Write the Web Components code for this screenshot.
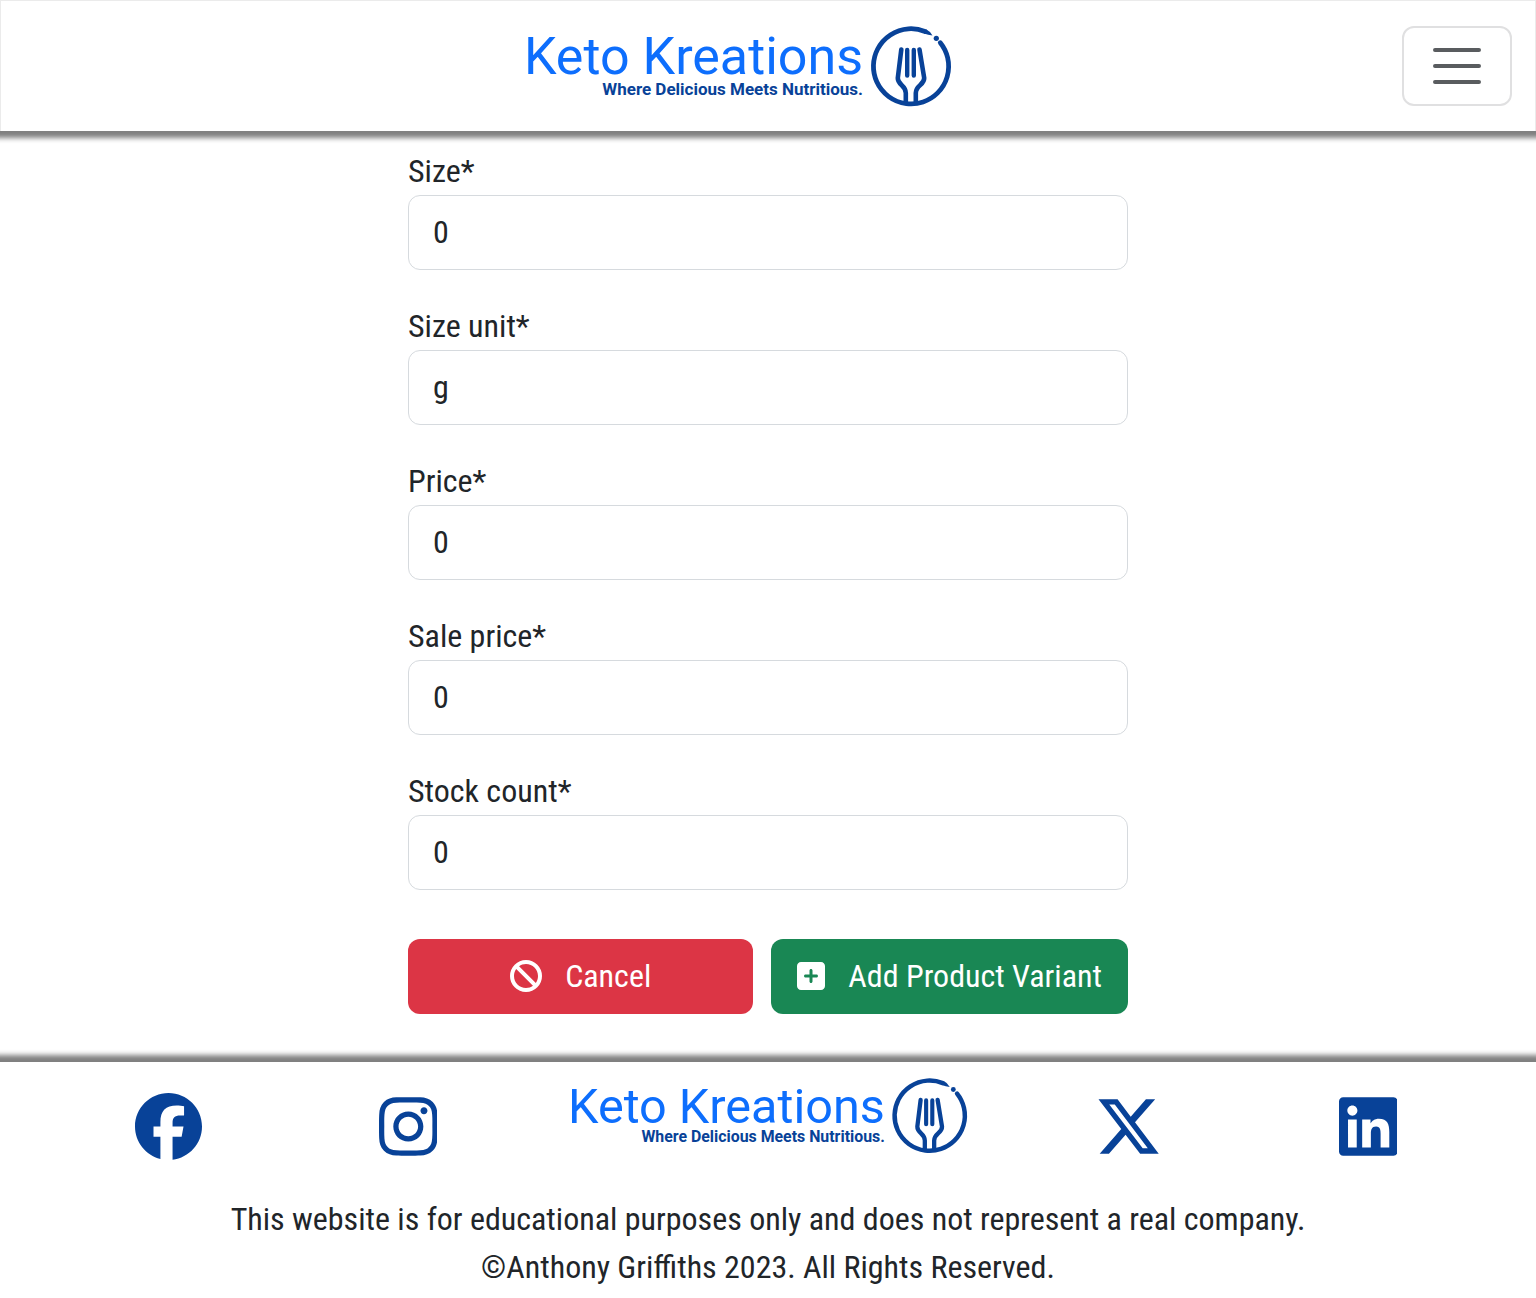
<!DOCTYPE html>
<html lang="en">
<head>
<meta charset="utf-8">
<meta name="viewport" content="width=device-width, initial-scale=1">
<title>Keto Kreations</title>
<style>
  body {
    margin: 0;
    background: #fff;
    color: #212529;
    font: 32px/48px "Roboto Condensed", "Liberation Sans Narrow", Roboto, sans-serif;
  }
</style>
</head>
<body>
<kk-page></kk-page>

<template id="kk-logo">
  <style>
    :host { display: block; width: 428px; }
    a { display: block; }
    svg { display: block; width: 100%; height: auto; overflow: visible; }
    text { font-family: Roboto, sans-serif; text-anchor: end; }
    .name { font-size: 52px; fill: #0d6efd; }
    .tag { font-size: 17px; font-weight: 700; fill: #084298; }
  </style>
  <a href="#" aria-label="Keto Kreations home">
    <svg viewBox="0 0 428 80">
      <text class="name" x="339" y="48">Keto Kreations</text>
      <text class="tag" x="339" y="69">Where Delicious Meets Nutritious.</text>
      <g fill="none" stroke="#084298" stroke-linecap="round" stroke-linejoin="round">
        <path stroke-width="4.800" d="M416.300 16.700A37.600 37.600 0 1 1 401 5.400"/>
        <circle cx="412.300" cy="12.300" r="2.600" fill="#084298" stroke="none"/>
        <path stroke-width="4.600" d="M377.300 23.500L373.800 52C373.500 59 381.800 59 381.800 67V76M395.500 23.500L400.200 52C400.500 59 391.800 59 391.800 67V76"/>
        <path stroke-width="4.400" d="M383.200 24V49.500M389.800 24V49.500"/>
      </g>
      <path fill="#084298" d="M402 3.200Q406 5 408.500 9.500Q404 9 400 7.500Z"/>
    </svg>
  </a>
</template>

<template id="kk-header">
  <style>
    :host {
      display: flex;
      align-items: center;
      position: relative;
      padding: 25px 23px 25px 73px;
      border: 1px solid #ebebeb;
      border-bottom: 0;
      background: #fff;
      box-shadow: 0 0 5px 7px gray;
      clip-path: inset(0 0 -20px 0);
    }
    .brand { flex: 1; display: flex; justify-content: center; }
    button {
      width: 110px;
      height: 80px;
      padding: 0;
      display: grid;
      place-items: center;
      background: none;
      border: 2px solid #e0e0e1;
      border-radius: 12px;
    }
    svg { width: 60px; height: 60px; }
  </style>
  <div class="brand"><kk-logo></kk-logo></div>
  <button type="button" aria-label="Toggle navigation">
    <svg viewBox="0 0 30 30"><path stroke="#212529" stroke-opacity=".75" stroke-linecap="round" stroke-width="2" d="M4 7h22M4 15h22M4 23h22"/></svg>
  </button>
</template>

<template id="kk-field">
  <style>
    :host { display: block; }
    label { display: block; }
    input {
      display: block;
      box-sizing: border-box;
      width: 100%;
      height: 75px;
      padding: 0 24px 2px;
      border: 1px solid #d6dade;
      border-radius: 12px;
      background: #fff;
      color: inherit;
      font: inherit;
      appearance: none;
    }
    input::-webkit-inner-spin-button { display: none; }
  </style>
  <label for="control"></label>
  <input id="control">
</template>

<template id="kk-button">
  <style>
    :host { display: block; }
    button {
      display: flex;
      align-items: center;
      justify-content: center;
      gap: 23px;
      width: 100%;
      height: 75px;
      padding: 0 26px 2px;
      border: 0;
      border-radius: 12px;
      background: var(--button-color);
      color: #fff;
      font: inherit;
      white-space: nowrap;
    }
  </style>
  <button type="button"><slot name="icon"></slot><slot></slot></button>
</template>

<template id="kk-footer">
  <style>
    :host {
      display: block;
      position: relative;
      padding: 16px 48px 7px;
      background: #fff;
      text-align: center;
      box-shadow: 0 0 5px 7px gray;
      clip-path: inset(-20px 0 0 0);
    }
    nav {
      display: grid;
      grid-template-columns: 1fr 1fr 2fr 1fr 1fr;
      justify-items: center;
      align-items: start;
      margin-bottom: 35px;
    }
    .social { display: block; margin-top: 15px; }
    kk-logo { width: 400px; }
    p { margin: 0; }
  </style>
  <nav>
    <a class="social" href="#" aria-label="Facebook"><kk-icon name="facebook" size="67"></kk-icon></a>
    <a class="social" href="#" aria-label="Instagram"><kk-icon name="instagram" size="67"></kk-icon></a>
    <kk-logo></kk-logo>
    <a class="social" href="#" aria-label="X"><kk-icon name="x" size="67"></kk-icon></a>
    <a class="social" href="#" aria-label="LinkedIn"><kk-icon name="linkedin" size="67"></kk-icon></a>
  </nav>
  <p>This website is for educational purposes only and does not represent a real company.</p>
  <p>©Anthony Griffiths 2023. All Rights Reserved.</p>
</template>

<template id="kk-page">
  <style>
    :host { display: block; }
    main { padding: 16px 48px 48px; }
    form { display: flex; flex-direction: column; gap: 32px; width: 50%; min-width: 640px; margin: 0 auto; }
    .actions { display: flex; gap: 18px; margin-top: 17px; }
    .cancel { flex: 1; --button-color: #dc3545; }
    .add { --button-color: #198754; }
  </style>
  <kk-header></kk-header>
  <main>
    <form>
      <kk-field label="Size*" type="number" value="0"></kk-field>
      <kk-field label="Size unit*" type="text" value="g"></kk-field>
      <kk-field label="Price*" type="number" value="0"></kk-field>
      <kk-field label="Sale price*" type="number" value="0"></kk-field>
      <kk-field label="Stock count*" type="number" value="0"></kk-field>
      <div class="actions">
        <kk-button class="cancel"><kk-icon slot="icon" name="ban" size="32"></kk-icon>Cancel</kk-button>
        <kk-button class="add"><kk-icon slot="icon" name="plus" size="32"></kk-icon>Add Product Variant</kk-button>
      </div>
    </form>
  </main>
  <kk-footer></kk-footer>
</template>

<script>
  const icons = {
    facebook: [512, '#084298', 'M512 256C512 114.600 397.400 0 256 0S0 114.600 0 256C0 376 82.700 476.800 194.200 504.500V334.200H141.400V256h52.800V222.300c0-87.100 39.400-127.500 125-127.500c16.200 0 44.200 3.200 55.700 6.400V172c-6-.6-16.500-1-29.600-1c-42 0-58.200 15.900-58.200 57.200V256h83.600l-14.400 78.200H287V510.100C413.800 494.800 512 386.900 512 256z'],
    instagram: [448, '#084298', 'M224.100 141c-63.600 0-114.900 51.300-114.900 114.900s51.300 114.900 114.900 114.900S339 319.500 339 255.900 287.700 141 224.100 141zm0 189.600c-41.100 0-74.700-33.500-74.700-74.700s33.500-74.700 74.700-74.700 74.700 33.500 74.700 74.700-33.600 74.700-74.700 74.700zm146.400-194.300c0 14.900-12 26.800-26.800 26.800-14.900 0-26.800-12-26.800-26.800s12-26.800 26.800-26.800 26.800 12 26.800 26.800zm76.100 27.200c-1.700-35.900-9.900-67.700-36.200-93.900-26.200-26.200-58-34.400-93.900-36.200-37-2.100-147.900-2.100-184.900 0-35.800 1.700-67.600 9.900-93.900 36.100s-34.400 58-36.200 93.900c-2.100 37-2.100 147.900 0 184.900 1.700 35.900 9.900 67.700 36.200 93.900s58 34.400 93.900 36.200c37 2.100 147.900 2.100 184.900 0 35.900-1.700 67.700-9.900 93.900-36.200 26.200-26.200 34.400-58 36.200-93.900 2.100-37 2.100-147.800 0-184.800zM398.800 388c-7.800 19.600-22.900 34.700-42.600 42.600-29.500 11.700-99.500 9-132.100 9s-102.700 2.600-132.100-9c-19.600-7.800-34.700-22.900-42.600-42.600-11.700-29.500-9-99.500-9-132.100s-2.600-102.700 9-132.100c7.800-19.600 22.900-34.700 42.600-42.600 29.500-11.700 99.500-9 132.100-9s102.700-2.600 132.100 9c19.600 7.800 34.700 22.900 42.600 42.600 11.700 29.500 9 99.500 9 132.100s2.700 102.700-9 132.100z'],
    x: [512, '#084298', 'M389.200 48h70.600L305.600 224.200 487 464H345L233.700 318.600 106.500 464H35.800L200.700 275.500 26.800 48H172.400L272.900 180.900 389.200 48zM364.400 421.800h39.100L151.100 88h-42L364.400 421.800z'],
    linkedin: [448, '#084298', 'M416 32H31.900C14.300 32 0 46.500 0 64.300v383.400C0 465.500 14.300 480 31.900 480H416c17.600 0 32-14.500 32-32.300V64.300c0-17.800-14.400-32.300-32-32.300zM135.400 416H69V202.200h66.500V416zm-33.200-243c-21.300 0-38.500-17.300-38.500-38.500S80.900 96 102.200 96c21.200 0 38.500 17.300 38.500 38.500 0 21.300-17.200 38.500-38.500 38.500zm282.100 243h-66.400V312c0-24.800-.5-56.700-34.500-56.700-34.600 0-39.900 27-39.900 54.900V416h-66.400V202.200h63.700v29.200h.9c8.900-16.800 30.600-34.500 62.900-34.500 67.200 0 79.700 44.300 79.700 101.900V416z'],
    ban: [512, '#fff', 'M367.200 412.500L99.500 144.800C77.100 176.100 64 214.500 64 256c0 106 86 192 192 192c41.500 0 79.900-13.100 111.200-35.500zm45.300-45.300C434.900 335.900 448 297.500 448 256c0-106-86-192-192-192c-41.500 0-79.900 13.100-111.200 35.500L412.500 367.200zM0 256a256 256 0 1 1 512 0A256 256 0 1 1 0 256z'],
    plus: [448, '#fff', 'M64 32C28.700 32 0 60.700 0 96V416c0 35.300 28.700 64 64 64H384c35.300 0 64-28.700 64-64V96c0-35.300-28.700-64-64-64H64zM200 344V280H136c-13.300 0-24-10.700-24-24s10.700-24 24-24h64V168c0-13.300 10.700-24 24-24s24 10.700 24 24v64h64c13.300 0 24 10.700 24 24s-10.700 24-24 24H248v64c0 13.300-10.700 24-24 24s-24-10.700-24-24z']
  };

  class Templated extends HTMLElement {
    constructor() {
      super();
      this.attachShadow({ mode: 'open' })
        .append(document.getElementById(this.localName).content.cloneNode(true));
    }
  }

  customElements.define('kk-icon', class extends HTMLElement {
    connectedCallback() {
      if (this.shadowRoot) return;
      const [width, color, path] = icons[this.getAttribute('name')];
      this.attachShadow({ mode: 'open' }).innerHTML = `
        <style>:host { display: block; } svg { display: block; width: auto; height: ${this.getAttribute('size')}px; }</style>
        <svg viewBox="0 0 ${width} 512" aria-hidden="true"><path fill="${color}" d="${path}"/></svg>`;
    }
  });
  customElements.define('kk-field', class extends Templated {
    connectedCallback() {
      const input = this.shadowRoot.querySelector('input');
      this.shadowRoot.querySelector('label').textContent = this.getAttribute('label');
      input.type = this.getAttribute('type');
      input.value = this.getAttribute('value');
    }
  });
  customElements.define('kk-logo', class extends Templated {});
  customElements.define('kk-button', class extends Templated {});
  customElements.define('kk-header', class extends Templated {});
  customElements.define('kk-footer', class extends Templated {});
  customElements.define('kk-page', class extends Templated {});
</script>
</body>
</html>
